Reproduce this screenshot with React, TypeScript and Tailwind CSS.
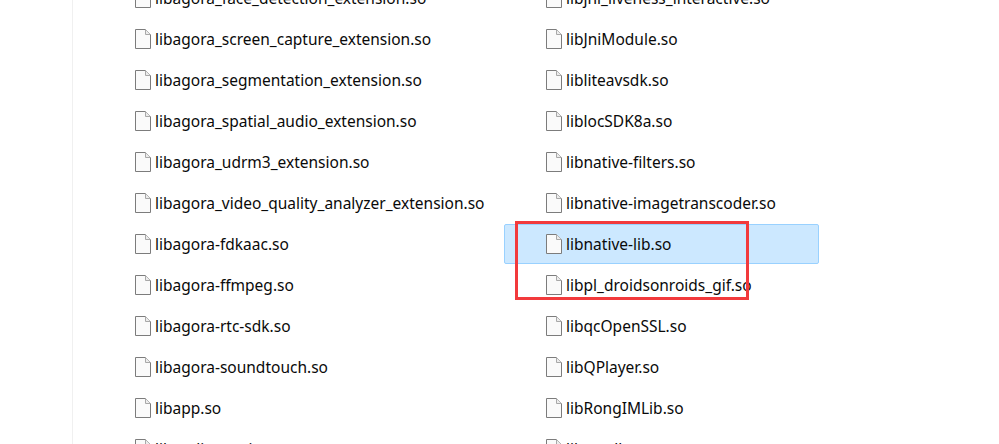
const leftFiles = [
  "libagora_face_detection_extension.so",
  "libagora_screen_capture_extension.so",
  "libagora_segmentation_extension.so",
  "libagora_spatial_audio_extension.so",
  "libagora_udrm3_extension.so",
  "libagora_video_quality_analyzer_extension.so",
  "libagora-fdkaac.so",
  "libagora-ffmpeg.so",
  "libagora-rtc-sdk.so",
  "libagora-soundtouch.so",
  "libapp.so",
  "libaudio_engine.so",
];

const rightFiles = [
  "libjni_liveness_interactive.so",
  "libJniModule.so",
  "libliteavsdk.so",
  "liblocSDK8a.so",
  "libnative-filters.so",
  "libnative-imagetranscoder.so",
  "libnative-lib.so",
  "libpl_droidsonroids_gif.so",
  "libqcOpenSSL.so",
  "libQPlayer.so",
  "libRongIMLib.so",
  "libsmall.so",
];

function FileIcon() {
  return (
    <svg width="18" height="21" viewBox="0 0 18 21" className="shrink-0">
      <path d="M1.5 0.5H11.5L16.5 5.5V19.5H1.5Z" fill="#fafafa" stroke="#7c7c7c" strokeWidth="1" />
      <path d="M11.5 0.5V5.5H16.5" fill="#ececec" stroke="#a8a8a8" strokeWidth="1" />
    </svg>
  );
}

function FileRow({ name, selected }: { name: string; selected?: boolean }) {
  return (
    <div
      className={`flex h-10 items-center gap-[3px] rounded-[2px] border pl-[40px] ${
        selected ? "border-[#99d1ff] bg-[#cce8ff]" : "border-transparent"
      }`}
    >
      <FileIcon />
      <span className="whitespace-nowrap pt-[2px] text-[15.5px] text-[#0a0a0a]">{name}</span>
    </div>
  );
}

export default function App() {
  return (
    <div className="relative h-[444px] w-[999px] overflow-hidden bg-white font-['Noto_Sans',sans-serif]">
      <div className="ml-[72px] flow-root h-full border-l border-[#f0f0f0] pl-5">
        <div className="-mt-[22px] flex gap-[96px]">
          <div className="flex w-[315px] flex-col gap-px">
            {leftFiles.map((f) => (
              <FileRow key={f} name={f} />
            ))}
          </div>
          <div className="flex w-[315px] flex-col gap-px">
            {rightFiles.map((f) => (
              <FileRow key={f} name={f} selected={f === "libnative-lib.so"} />
            ))}
          </div>
        </div>
      </div>
      <div className="absolute left-[515px] top-[221px] h-[79px] w-[234px] border-[3px] border-[#f23a3c]" />
    </div>
  );
}
